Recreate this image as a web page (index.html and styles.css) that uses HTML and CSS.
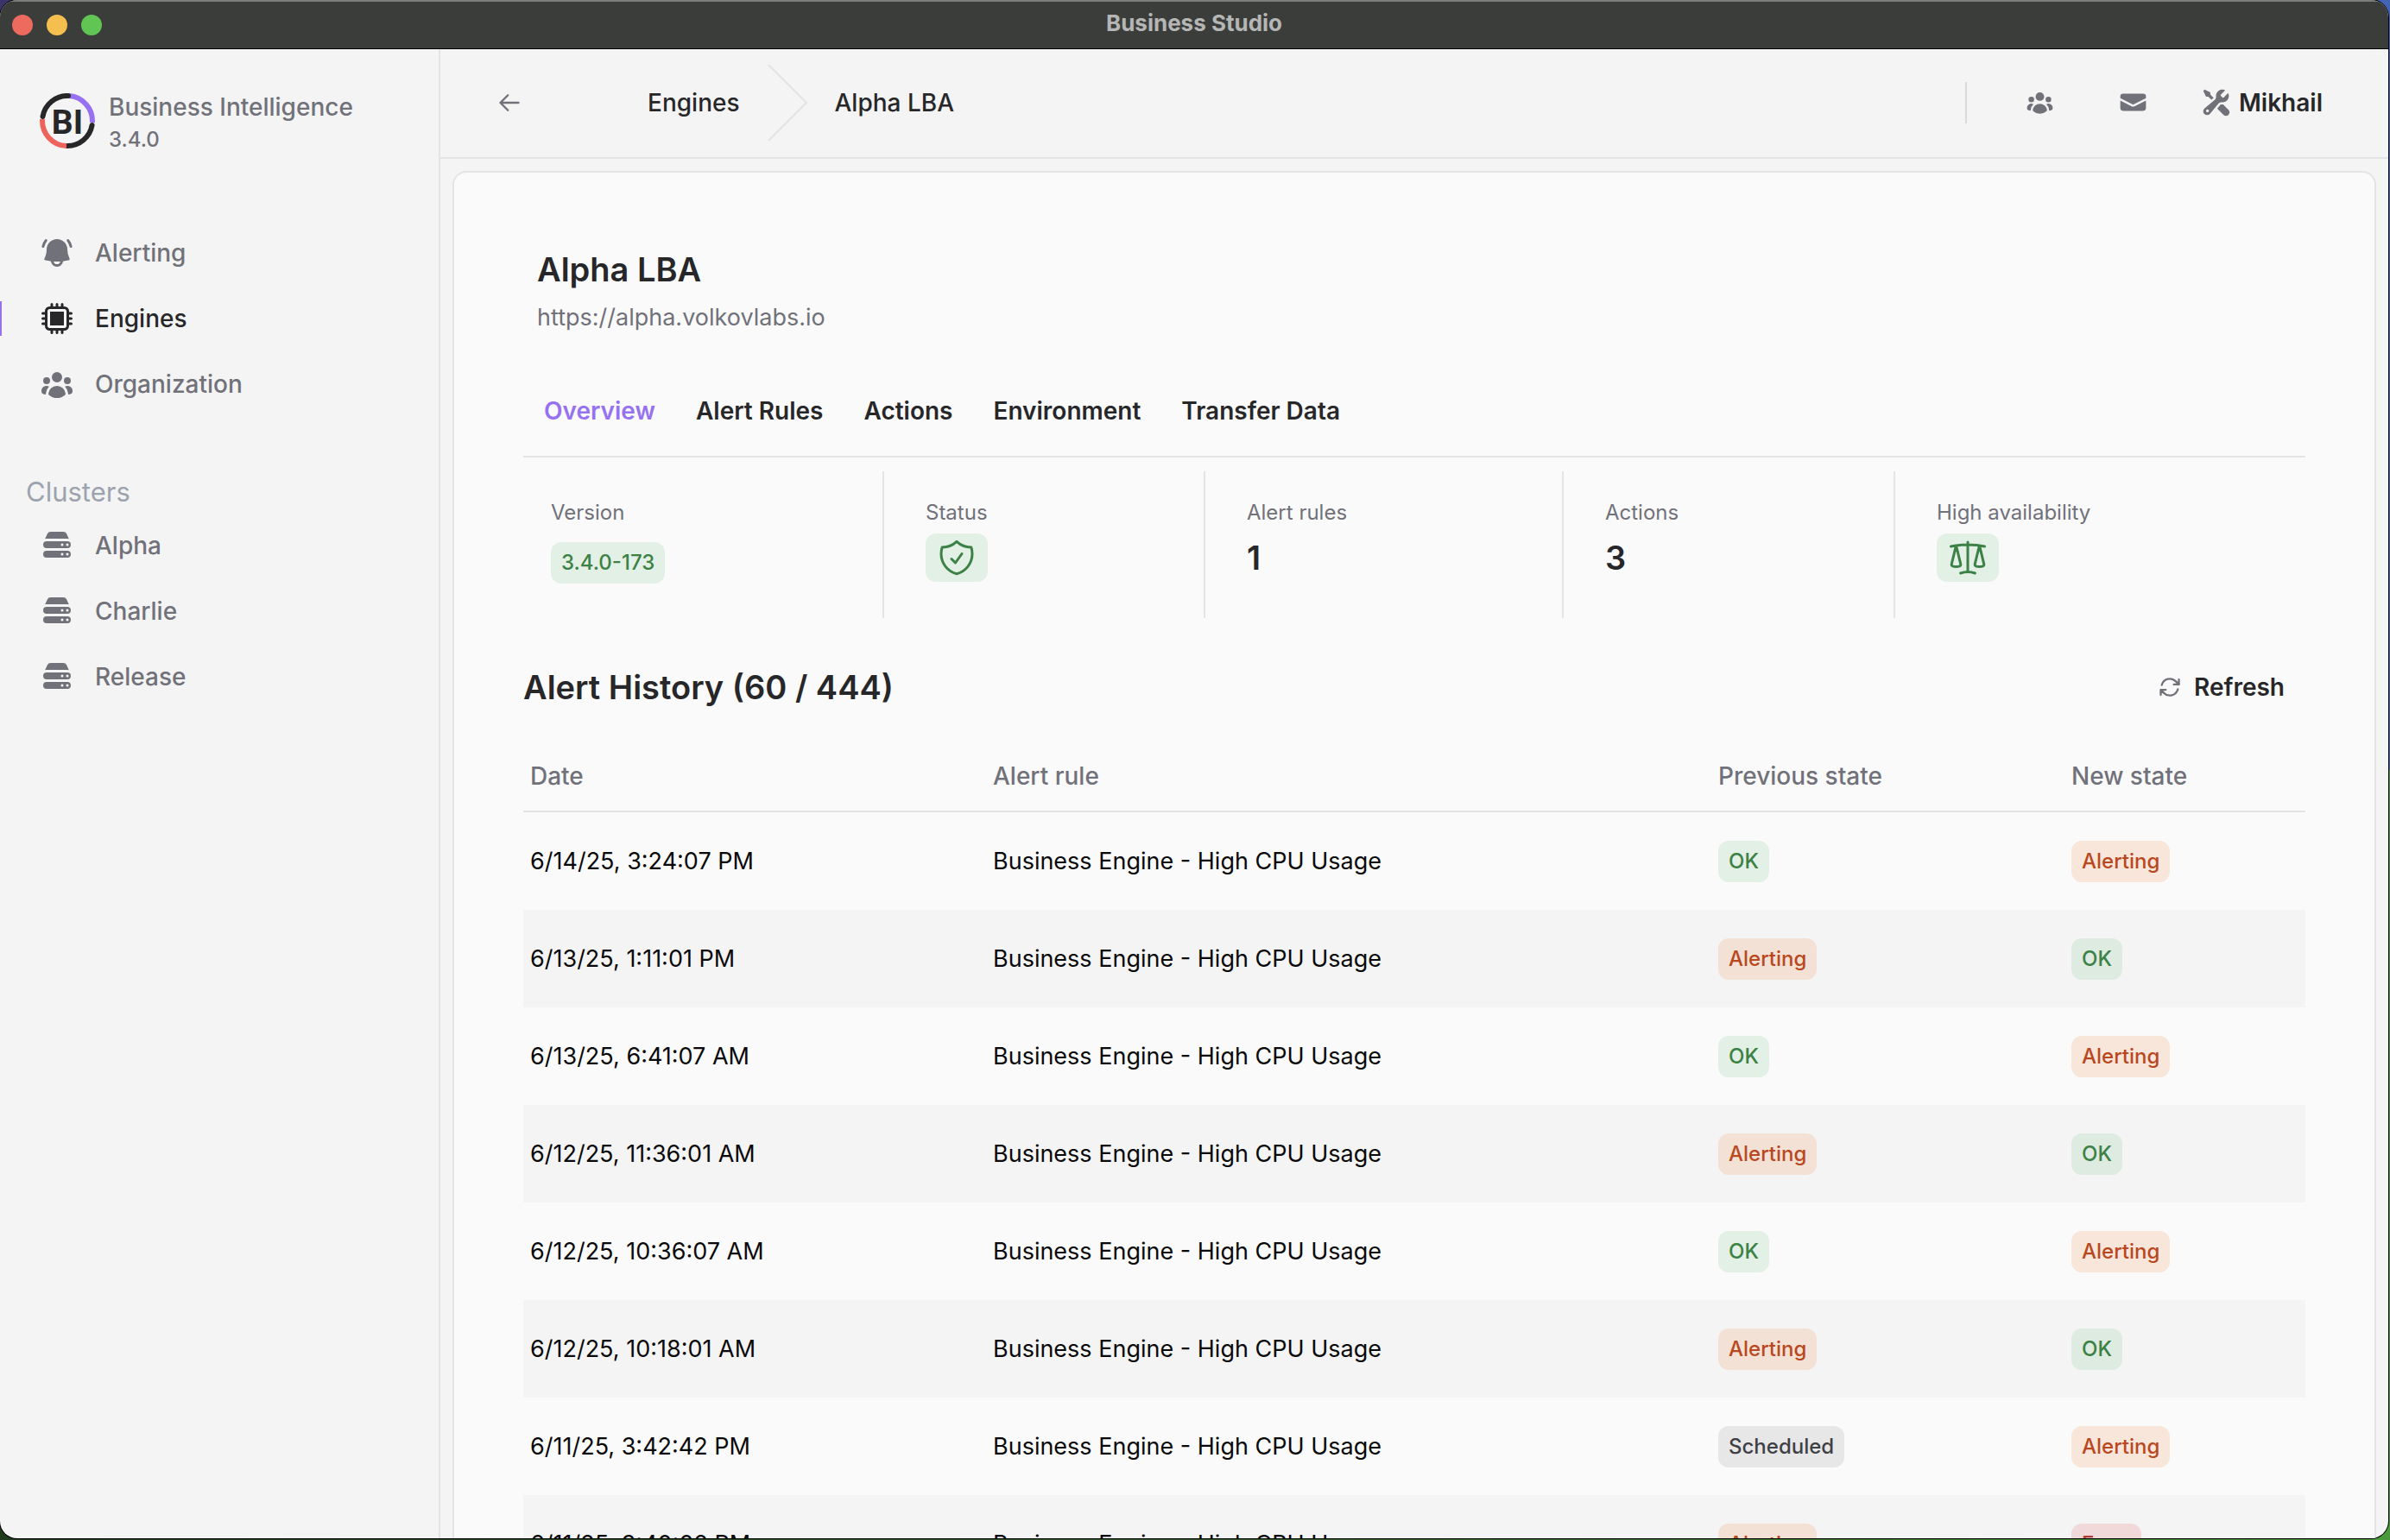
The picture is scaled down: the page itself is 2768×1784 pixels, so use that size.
FILE: index.html
```html
<!DOCTYPE html>
<html lang="en">
<head>
<meta charset="utf-8">
<title>Business Studio</title>
<link rel="stylesheet" href="styles.css">
</head>
<body>
<svg class="sprite" aria-hidden="true">
  <symbol id="bell" viewBox="0 0 20 20"><path d="M4.214 3.227a.75.75 0 0 0-1.156-.955 8.97 8.97 0 0 0-1.856 3.825.75.75 0 0 0 1.466.316 7.47 7.47 0 0 1 1.546-3.186ZM16.942 2.272a.75.75 0 0 0-1.157.955 7.47 7.47 0 0 1 1.547 3.186.75.75 0 0 0 1.466-.316 8.971 8.971 0 0 0-1.856-3.825Z"/><path fill-rule="evenodd" d="M10 2a6 6 0 0 0-6 6c0 1.887-.454 3.665-1.257 5.234a.75.75 0 0 0 .515 1.076 32.91 32.91 0 0 0 3.256.508 3.5 3.5 0 0 0 6.972 0 32.903 32.903 0 0 0 3.256-.508.75.75 0 0 0 .515-1.076A11.448 11.448 0 0 1 16 8a6 6 0 0 0-6-6Zm0 14.5a2 2 0 0 1-1.95-1.557 33.54 33.54 0 0 0 3.9 0A2 2 0 0 1 10 16.5Z"/></symbol>
  <symbol id="chip" viewBox="0 0 20 20"><path d="M14 6H6v8h8V6Z"/><path fill-rule="evenodd" d="M9.25 3V1.75a.75.75 0 0 1 1.5 0V3h1.5V1.75a.75.75 0 0 1 1.5 0V3h.5A2.75 2.75 0 0 1 17 5.75v.5h1.25a.75.75 0 0 1 0 1.5H17v1.5h1.25a.75.75 0 0 1 0 1.5H17v1.5h1.25a.75.75 0 0 1 0 1.5H17v.5A2.75 2.75 0 0 1 14.25 17h-.5v1.25a.75.75 0 0 1-1.5 0V17h-1.5v1.25a.75.75 0 0 1-1.5 0V17h-1.5v1.25a.75.75 0 0 1-1.5 0V17h-.5A2.75 2.75 0 0 1 3 14.25v-.5H1.75a.75.75 0 0 1 0-1.5H3v-1.5H1.75a.75.75 0 0 1 0-1.5H3v-1.5H1.75a.75.75 0 0 1 0-1.5H3v-.5A2.75 2.75 0 0 1 5.75 3h.5V1.75a.75.75 0 0 1 1.5 0V3h1.5ZM4.5 5.75c0-.69.56-1.25 1.25-1.25h8.5c.69 0 1.25.56 1.25 1.25v8.5c0 .69-.56 1.25-1.25 1.25h-8.5c-.69 0-1.25-.56-1.25-1.25v-8.5Z"/></symbol>
  <symbol id="group" viewBox="0 0 20 20"><path d="M10 9a3 3 0 1 0 0-6 3 3 0 0 0 0 6ZM6 8a2 2 0 1 1-4 0 2 2 0 0 1 4 0ZM1.49 15.326a.78.78 0 0 1-.358-.442 3 3 0 0 1 4.308-3.516 6.484 6.484 0 0 0-1.905 3.959c-.023.222-.014.442.025.654a4.97 4.97 0 0 1-2.07-.655ZM16.44 15.98a4.97 4.97 0 0 0 2.07-.654.78.78 0 0 0 .357-.442 3 3 0 0 0-4.308-3.517 6.484 6.484 0 0 1 1.907 3.96 2.32 2.32 0 0 1-.026.654ZM18 8a2 2 0 1 1-4 0 2 2 0 0 1 4 0ZM5.304 16.19a.844.844 0 0 1-.277-.71 5 5 0 0 1 9.947 0 .843.843 0 0 1-.277.71A6.975 6.975 0 0 1 10 18a6.974 6.974 0 0 1-4.696-1.81Z"/></symbol>
  <symbol id="server" viewBox="0 0 20 20"><path d="M4.464 3.162A2 2 0 0 1 6.28 2h7.44a2 2 0 0 1 1.816 1.162l1.154 2.5c.067.145.115.291.145.438A3.508 3.508 0 0 0 16 6H4c-.288 0-.568.035-.835.1.03-.147.078-.293.145-.438l1.154-2.5Z"/><path fill-rule="evenodd" d="M2 9.5a2 2 0 0 1 2-2h12a2 2 0 1 1 0 4H4a2 2 0 0 1-2-2Zm13.24 0a.75.75 0 0 1 .75-.75H16a.75.75 0 0 1 .75.75v.01a.75.75 0 0 1-.75.75h-.01a.75.75 0 0 1-.75-.75V9.5Zm-2.25-.75a.75.75 0 0 0-.75.75v.01c0 .414.336.75.75.75H13a.75.75 0 0 0 .75-.75V9.5a.75.75 0 0 0-.75-.75h-.01ZM2 15a2 2 0 0 1 2-2h12a2 2 0 1 1 0 4H4a2 2 0 0 1-2-2Zm13.24 0a.75.75 0 0 1 .75-.75H16a.75.75 0 0 1 .75.75v.01a.75.75 0 0 1-.75.75h-.01a.75.75 0 0 1-.75-.75V15Zm-2.25-.75a.75.75 0 0 0-.75.75v.01c0 .414.336.75.75.75H13a.75.75 0 0 0 .75-.75V15a.75.75 0 0 0-.75-.75h-.01Z"/></symbol>
  <symbol id="envelope" viewBox="0 0 20 20"><path d="M3 4a2 2 0 0 0-2 2v1.161l8.441 4.221a1.25 1.25 0 0 0 1.118 0L19 7.162V6a2 2 0 0 0-2-2H3Z"/><path d="m19 8.839-7.77 3.885a2.75 2.75 0 0 1-2.46 0L1 8.839V14a2 2 0 0 0 2 2h14a2 2 0 0 0 2-2V8.839Z"/></symbol>
  <symbol id="tools" viewBox="0 0 20 20"><path fill-rule="evenodd" d="M14.5 10a4.5 4.5 0 0 0 4.284-5.882c-.105-.324-.51-.391-.752-.15L15.34 6.66a.454.454 0 0 1-.493.11 3.01 3.01 0 0 1-1.618-1.616.455.455 0 0 1 .11-.494l2.694-2.692c.24-.241.174-.647-.15-.752a4.5 4.5 0 0 0-5.873 4.575c.055.873-.128 1.808-.8 2.368l-7.23 6.024a2.724 2.724 0 1 0 3.837 3.837l6.024-7.23c.56-.672 1.495-.855 2.368-.8.096.007.193.01.291.01ZM5 16a1 1 0 1 1-2 0 1 1 0 0 1 2 0Z"/><path d="M14.5 11.5c.173 0 .345-.007.514-.022l3.754 3.754a2.5 2.5 0 0 1-3.536 3.536l-4.41-4.41 2.172-2.607c.052-.063.147-.138.342-.196.202-.06.469-.087.777-.067.128.008.257.012.387.012ZM6 4.586l2.33 2.33a.452.452 0 0 1-.08.09L6.8 8.214 4.586 6H3.309a.5.5 0 0 1-.447-.276l-1.7-3.402a.5.5 0 0 1 .093-.577l.49-.49a.5.5 0 0 1 .577-.094l3.402 1.7A.5.5 0 0 1 6 3.31v1.277Z"/></symbol>
</svg>

<div class="window">
  <div class="titlebar">
    <div class="lights"><span class="light close"></span><span class="light minimize"></span><span class="light zoom"></span></div>
    <div class="window-title">Business Studio</div>
  </div>

  <div class="app">
    <aside class="sidebar">
      <div class="brand">
        <svg class="logo" viewBox="0 0 64 64" aria-hidden="true">
          <g fill="none" stroke-width="6">
            <path stroke="#9672f0" d="M34 3.1A29 29 0 0 1 60.900 34"/>
            <path stroke="#27272a" stroke-linecap="round" d="M60.600 37A29 29 0 0 1 32 61"/>
            <path stroke="#ee625c" d="M31 61A29 29 0 0 1 3.100 30"/>
            <path stroke="#27272a" stroke-linecap="round" d="M3.500 27A29 29 0 0 1 33 3"/>
          </g>
          <text x="32" y="47" text-anchor="middle" class="logo-text">BI</text>
        </svg>
        <div>
          <div class="brand-name">Business Intelligence</div>
          <div class="brand-version">3.4.0</div>
        </div>
      </div>
      <nav class="menu">
        <a class="menu-item" href="#"><svg class="icon"><use href="#bell"/></svg>Alerting</a>
        <a class="menu-item current" href="#"><svg class="icon"><use href="#chip"/></svg>Engines</a>
        <a class="menu-item" href="#"><svg class="icon"><use href="#group"/></svg>Organization</a>
      </nav>
      <h3 class="menu-heading">Clusters</h3>
      <nav class="menu">
        <a class="menu-item" href="#"><svg class="icon"><use href="#server"/></svg>Alpha</a>
        <a class="menu-item" href="#"><svg class="icon"><use href="#server"/></svg>Charlie</a>
        <a class="menu-item" href="#"><svg class="icon"><use href="#server"/></svg>Release</a>
      </nav>
    </aside>

    <div class="main">
      <header class="topbar">
        <button class="back" type="button" aria-label="Back"><svg class="icon-small line" viewBox="0 0 24 24"><path d="M10.500 19.500 3 12m0 0 7.500-7.500M3 12h18"/></svg></button>
        <nav class="crumbs">
          <a href="#">Engines</a>
          <svg class="crumb-divider" viewBox="0 0 24 44" aria-hidden="true"><path d="M.293 0l22 22-22 22h1.414l22-22-22-22H.293z"/></svg>
          <a href="#">Alpha LBA</a>
        </nav>
        <div class="tools">
          <button type="button" aria-label="Users"><svg class="icon-medium"><use href="#group"/></svg></button>
          <button type="button" aria-label="Messages"><svg class="icon-medium"><use href="#envelope"/></svg></button>
          <button type="button" class="user"><svg class="icon-medium"><use href="#tools"/></svg>Mikhail</button>
        </div>
      </header>

      <main class="card">
        <div class="heading">
          <h1>Alpha LBA</h1>
          <p>https://alpha.volkovlabs.io</p>
        </div>
        <nav class="tabs">
          <a class="active" href="#">Overview</a>
          <a href="#">Alert Rules</a>
          <a href="#">Actions</a>
          <a href="#">Environment</a>
          <a href="#">Transfer Data</a>
        </nav>
        <dl class="stats">
          <div class="stat"><dt>Version</dt><dd class="version"><span class="badge green">3.4.0-173</span></dd></div>
          <div class="stat"><dt>Status</dt><dd><span class="badge green icon-badge"><svg class="icon-large line" viewBox="0 0 24 24" role="img" aria-label="Healthy"><path d="M9 12.750 11.250 15 15 9.750m-3-7.036A11.959 11.959 0 0 1 3.598 6 11.990 11.990 0 0 0 3 9.749c0 5.592 3.824 10.290 9 11.623 5.176-1.332 9-6.030 9-11.622 0-1.310-.210-2.571-.598-3.751h-.152c-3.196 0-6.100-1.248-8.250-3.285Z"/></svg></span></dd></div>
          <div class="stat"><dt>Alert rules</dt><dd>1</dd></div>
          <div class="stat"><dt>Actions</dt><dd>3</dd></div>
          <div class="stat"><dt>High availability</dt><dd><span class="badge green icon-badge"><svg class="icon-large line" viewBox="0 0 24 24" role="img" aria-label="Enabled"><path d="M12 3v17.250m0 0c-1.472 0-2.882.265-4.185.750M12 20.250c1.472 0 2.882.265 4.185.750M18.750 4.970A48.416 48.416 0 0 0 12 4.500c-2.291 0-4.545.160-6.750.470m13.500 0c1.010.143 2.010.317 3 .520m-3-.520 2.620 10.726c.122.499-.106 1.028-.589 1.202a5.988 5.988 0 0 1-2.031.352 5.988 5.988 0 0 1-2.031-.352c-.483-.174-.711-.703-.590-1.202L18.750 4.971Zm-16.500.520c.990-.203 1.990-.377 3-.520m0 0 2.620 10.726c.122.499-.106 1.028-.589 1.202a5.989 5.989 0 0 1-2.031.352 5.989 5.989 0 0 1-2.031-.352c-.483-.174-.711-.703-.590-1.202L5.250 4.971Z"/></svg></span></dd></div>
        </dl>
        <div class="section-head">
          <h2>Alert History (60 / 444)</h2>
          <button type="button" class="refresh"><svg class="icon-small line" viewBox="0 0 24 24"><path d="M16.023 9.348h4.992v-.001M2.985 19.644v-4.992m0 0h4.992m-4.993 0 3.181 3.183a8.250 8.250 0 0 0 13.803-3.700M4.031 9.865a8.250 8.250 0 0 1 13.803-3.700l3.181 3.182m0-4.991v4.990"/></svg>Refresh</button>
        </div>
        <table class="history">
          <thead><tr><th class="col-date">Date</th><th class="col-rule">Alert rule</th><th class="col-previous">Previous state</th><th>New state</th></tr></thead>
          <tbody>
            <tr><td>6/14/25, 3:24:07 PM</td><td>Business Engine - High CPU Usage</td><td><span class="badge green">OK</span></td><td><span class="badge orange">Alerting</span></td></tr>
            <tr><td>6/13/25, 1:11:01 PM</td><td>Business Engine - High CPU Usage</td><td><span class="badge orange">Alerting</span></td><td><span class="badge green">OK</span></td></tr>
            <tr><td>6/13/25, 6:41:07 AM</td><td>Business Engine - High CPU Usage</td><td><span class="badge green">OK</span></td><td><span class="badge orange">Alerting</span></td></tr>
            <tr><td>6/12/25, 11:36:01 AM</td><td>Business Engine - High CPU Usage</td><td><span class="badge orange">Alerting</span></td><td><span class="badge green">OK</span></td></tr>
            <tr><td>6/12/25, 10:36:07 AM</td><td>Business Engine - High CPU Usage</td><td><span class="badge green">OK</span></td><td><span class="badge orange">Alerting</span></td></tr>
            <tr><td>6/12/25, 10:18:01 AM</td><td>Business Engine - High CPU Usage</td><td><span class="badge orange">Alerting</span></td><td><span class="badge green">OK</span></td></tr>
            <tr><td>6/11/25, 3:42:42 PM</td><td>Business Engine - High CPU Usage</td><td><span class="badge gray">Scheduled</span></td><td><span class="badge orange">Alerting</span></td></tr>
            <tr><td>6/11/25, 3:40:02 PM</td><td>Business Engine - High CPU Usage</td><td><span class="badge orange">Alerting</span></td><td><span class="badge red">Error</span></td></tr>
          </tbody>
        </table>
      </main>
    </div>
  </div>
</div>
</body>
</html>
```
FILE: styles.css
```css
* { box-sizing: border-box; }

body {
  margin: 0;
  height: 100vh;
  padding: 0 2px 2px 0;
  overflow: hidden;
  background:
    linear-gradient(to right, #1f3a1c, #2f5a26 50%, #4a9a3c) bottom / 100% 50% no-repeat,
    linear-gradient(to right, #3a3468, #4463b4) top / 100% 50% no-repeat;
  font-family: Inter, "Liberation Sans", sans-serif;
  font-size: 28px;
  line-height: 48px;
  color: #09090b;
}

h1, h2, h3, p, dl, dd { margin: 0; }
a { color: inherit; text-decoration: none; }
button { border: 0; padding: 0; background: none; font: inherit; color: inherit; display: flex; align-items: center; }
svg { display: block; flex: none; fill: currentColor; }
.sprite { display: none; }
.line { fill: none; stroke: currentColor; stroke-width: 1.5; stroke-linecap: round; stroke-linejoin: round; }
.icon-large { width: 48px; height: 48px; }
.icon { width: 40px; height: 40px; }
.icon-medium { width: 33px; height: 33px; color: #71717a; }
.icon-small { width: 28px; height: 28px; color: #71717a; stroke-width: 2; }

.window {
  height: 100%;
  display: flex;
  flex-direction: column;
  overflow: hidden;
  border-radius: 20px;
  background: #f4f4f4;
  box-shadow: 0 0 0 1px #000;
}

.titlebar {
  flex: none;
  position: relative;
  height: 57px;
  display: flex;
  align-items: center;
  justify-content: center;
  background: #3b3d3b;
  border-top: 2px solid #7b7d7b;
  border-bottom: 1px solid #000;
}
.lights { position: absolute; left: 14px; display: flex; gap: 16px; }
.light { width: 24px; height: 24px; border-radius: 50%; }
.close { background: #ed6a5e; }
.minimize { background: #f5bf4f; }
.zoom { background: #61c554; }
.window-title { padding-bottom: 4px; font-size: 26px; font-weight: 700; color: #b5b6b5; line-height: 48px; }

.app { flex: 1; min-height: 0; display: flex; }

.sidebar { flex: none; width: 510px; border-right: 2px solid #e4e4e7; color: #71717a; font-weight: 500; }
.brand { display: flex; align-items: flex-start; gap: 16px; padding: 47px 46px 0; }
.brand-name { line-height: 40px; }
.brand-version { font-size: 24px; line-height: 36px; }
.logo { width: 64px; height: 64px; margin-top: 4px; }
.logo-text { font-family: Roboto, "Liberation Sans", sans-serif; font-size: 39px; font-weight: 700; fill: #27272a; }
.menu { display: flex; flex-direction: column; }
.brand + .menu { margin-top: 75px; }
.menu-item { display: flex; align-items: center; gap: 24px; height: 76px; padding-left: 46px; }
.current { color: #27272a; background: linear-gradient(#9672f0, #9672f0) left center / 2px 40px no-repeat; }
.menu-heading { margin-top: 63px; padding-left: 30px; font-size: 31px; font-weight: 400; color: #9ca3af; }

.main { flex: 1; min-width: 0; display: flex; flex-direction: column; }
.topbar {
  flex: none;
  height: 127px;
  display: flex;
  align-items: center;
  padding: 0 76px 2px 66px;
  border-bottom: 2px solid #e4e4e7;
  font-weight: 500;
  color: #27272a;
}
.crumbs { display: flex; align-items: center; gap: 31px; margin-left: 146px; }
.crumb-divider { width: 48px; height: 88px; color: #e4e4e7; }
.tools { display: flex; align-items: center; height: 48px; margin-left: auto; padding-left: 68px; gap: 75px; border-left: 2px solid #d9d9db; }
.user { gap: 10px; margin-left: -12px; font-weight: 600; }

.card {
  flex: 1;
  min-height: 0;
  overflow: hidden;
  margin: 14px 14px 0;
  padding: 88px 80px 0;
  border: 2px solid #e4e4e7;
  border-bottom: 0;
  border-radius: 16px 16px 0 0;
  background: #fafafa;
}
.heading { padding-left: 16px; }
h1, h2 { font-size: 38px; font-weight: 600; line-height: 48px; color: #27272a; }
.heading p { margin-top: 8px; font-size: 27px; color: #71717a; }
.tabs { display: flex; gap: 47px; margin-top: 36px; padding: 24px 24px 28px; border-bottom: 2px solid #e4e4e7; font-weight: 600; color: #27272a; }
.active { color: #9672f0; }

.stats { display: grid; grid-template-columns: 416px 372px 415px 384px 1fr; margin-top: 16px; }
.stat { height: 170px; padding: 32px 0 0 48px; border-left: 2px solid #e4e4e7; }
.stat:first-child { padding-left: 32px; border-left: 0; }
dt { font-size: 24px; line-height: 32px; color: #71717a; }
dd { height: 56px; margin-top: 8px; font-size: 38px; font-weight: 600; line-height: 56px; color: #27272a; }
.version { padding-top: 10px; }

.badge { display: block; width: fit-content; padding: 0 12px; border-radius: 12px; font-size: 24px; font-weight: 500; line-height: 48px; }
.green { background: rgb(34 160 50 / 10%); color: #3c8145; }
.orange { background: rgb(240 110 30 / 14%); color: #b9481f; }
.gray { background: rgb(100 100 105 / 12%); color: #3f3f46; }
.red { background: rgb(225 50 60 / 14%); color: #b03a38; }
.icon-badge { padding: 4px 12px; }

.section-head { display: flex; align-items: center; justify-content: space-between; margin-top: 56px; padding-right: 24px; line-height: 48px; }
.refresh { gap: 14px; font-weight: 600; color: #27272a; }

.history { width: 100%; margin-top: 40px; border-collapse: separate; border-spacing: 0; table-layout: fixed; }
th, td { text-align: left; }
th { padding: 19px 8px 20px; border-bottom: 2px solid #e4e4e7; font-weight: 500; line-height: 40px; color: #71717a; }
td { height: 113px; padding: 1px 8px 0; font-size: 27px; }
tbody tr:nth-child(even) { background: #f4f4f4; }
.col-date { width: 536px; }
.col-rule { width: 840px; }
.col-previous { width: 409px; }
```
